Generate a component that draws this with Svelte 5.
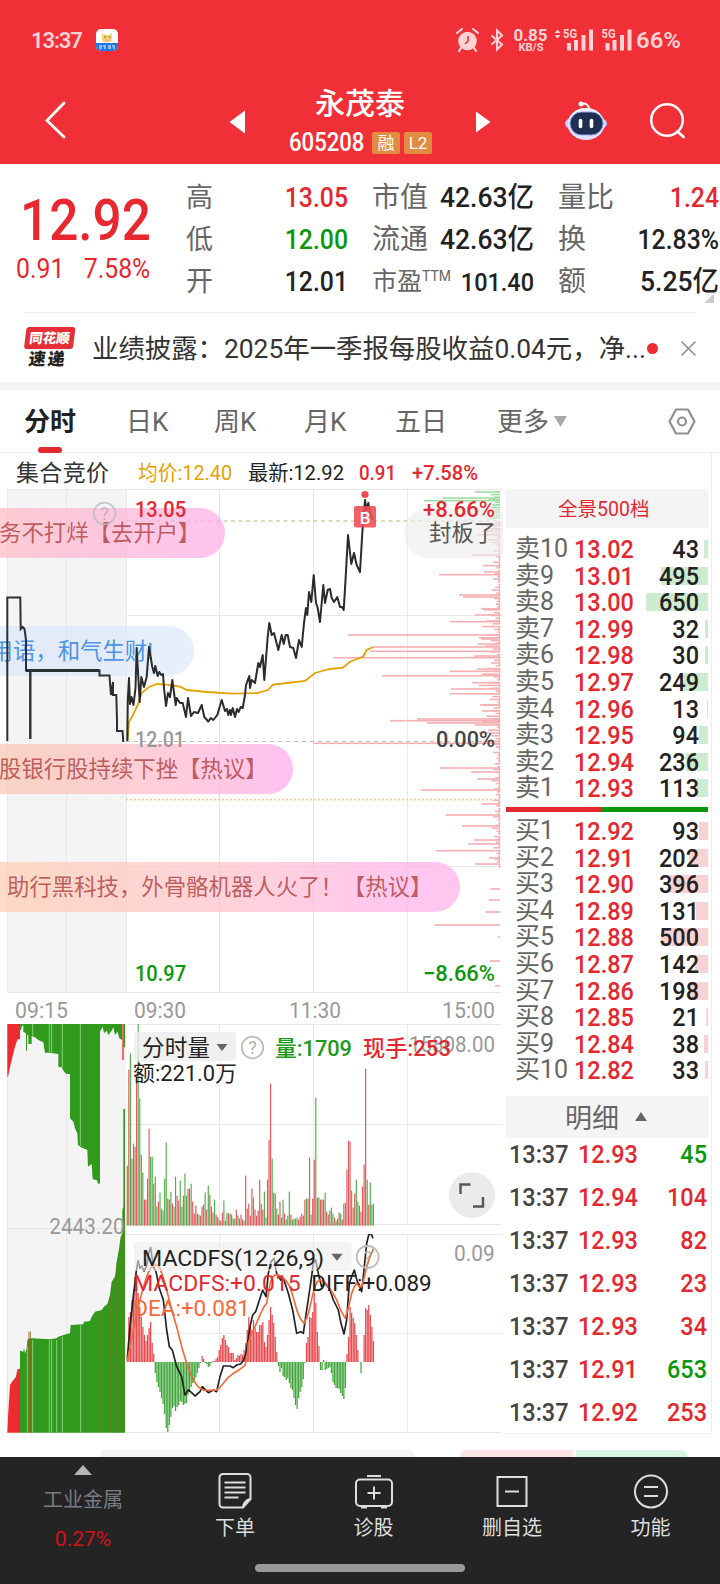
<script>
  const quotes = [
    ['高', '13.05', 'red', '市值', '42.63亿', 'unit', '量比', '1.24', 'red'],
    ['低', '12.00', 'green', '流通', '42.63亿', 'unit', '换', '12.83%', 'percent'],
    ['开', '12.01', '', '市盈', '101.40', 'small', '额', '5.25亿', 'unit']
  ];

  const asks = [
    ['卖10', '13.02', 43], ['卖9', '13.01', 495], ['卖8', '13.00', 650], ['卖7', '12.99', 32],
    ['卖6', '12.98', 30], ['卖5', '12.97', 249], ['卖4', '12.96', 13], ['卖3', '12.95', 94],
    ['卖2', '12.94', 236], ['卖1', '12.93', 113]
  ];
  const bids = [
    ['买1', '12.92', 93], ['买2', '12.91', 202], ['买3', '12.90', 396], ['买4', '12.89', 131],
    ['买5', '12.88', 500], ['买6', '12.87', 142], ['买7', '12.86', 198], ['买8', '12.85', 21],
    ['买9', '12.84', 38], ['买10', '12.82', 33]
  ];
  const trades = [
    ['12.93', 45, 'green'], ['12.94', 104, 'red'], ['12.93', 82, 'red'], ['12.93', 23, 'red'],
    ['12.93', 34, 'red'], ['12.91', 653, 'green'], ['12.92', 253, 'red']
  ];

  const auctionLine =
    '7.3,741 7.3,597.5 20.3,597.5 20.7,629 22.7,627 24.5,629 26,640 26,670.5 99.5,670.5 99.5,675.5 109.5,675.5 110,683 111,695 113,682 113,695 116.3,695 117,720 117,731 122.5,731 123.3,742';

  const priceLine =
    '127.3,741 127.8,700 129,678 130,704 131.5,697 133.5,705 135.5,688 136.7,648 138,672 139.7,702 141.3,677 144,687 146.7,677 149,647 152.3,667 154,673 155.3,666 157.7,676 159.3,672 161.3,675 163,674 164,688 166,706 168,693 170,697 172.3,680 175.7,705 176.7,698 180,703 182.7,703 186,717 188,698 191,716 194,712 198,713 201.7,705 204.3,717 208.3,721.5 210.7,718 213.3,720 217.3,715 221.7,700 225,711 227,709 228.3,715 230,710 231,715 232.7,708 235,717 237,709 238.7,712 240.7,707 242.7,708 245,695 246,685 249.3,676 250,688 251.7,680 255,683 258.3,663 260,667 262.7,655 264.3,680 267.7,637 269.3,623 271.7,635 274,633 278.3,650 281.7,635 283.7,644 285.7,635 287.7,635 290,647 293.3,648 296,658 299,640 301.7,647 304,623 306,608 307.3,615 309,592 311.3,602 313.7,575 316,603 317.7,608 320,622 323.3,585 325,603 327.7,590 330,589 331.7,598 334,602 337.3,597 340,607 342,607 343.7,610 345.7,577 348,535 351.3,564 354,553 356.7,565 360,572 362.3,533 365,500 366.5,510 368.3,503 370,513 372.7,520';

  const averageLine =
    '127.7,740 129,722 133,715 137.7,705 141.7,693 149,687 157,684 167,684.7 180,686.7 187,690 207,692 233,693.7 257,693 268,690 273,684.7 287,683 305,681 315,673 330,669 343,667.7 350,661.7 360,658 363,656.7 366.7,650 373,647';

  // [y, left edge] of the long bars in the price distribution
  const askProfile = [[492, 475], [498, 443], [500.7, 424], [505, 492], [511, 488], [517, 489]];
  const bidProfile = [
    [525, 481], [529, 486], [534.7, 477], [555, 472], [565.7, 483], [572, 484], [574.7, 439], [595, 459],
    [597, 463], [608.7, 481], [615, 475], [621.7, 450], [635, 348], [639, 481], [644, 478], [647, 373],
    [651.3, 370], [657.7, 333], [656, 474], [671.3, 450], [669, 477], [675.7, 382], [682.7, 472], [689, 451],
    [693.7, 450], [705, 480], [711, 482], [719, 417], [720.7, 390], [723, 427], [725, 475], [743.3, 313.5],
    [768, 440], [772, 471], [779, 477], [790, 421], [804, 482], [815, 446], [826, 462], [840, 474], [844, 468],
    [850.7, 436], [858, 489], [864, 475], [889, 490], [900, 489], [912, 485], [925, 434], [937, 498],
    [961, 490], [986, 495]
  ];
  const fine = [3, 9, 5, 12, 4, 2, 8, 14, 6, 3, 10, 5, 7, 2, 11, 4, 6];
  const profileTicks = Array.from({ length: 122 }, (_, i) => {
    const y = 523 + i * 2.8;
    const dense = (y > 605 && y < 745) || y < 540;
    return [y, 500 - (dense ? fine[i % 17] * 1.5 : fine[i % 17] * 0.6)];
  });
  const askTicks = Array.from({ length: 11 }, (_, i) => [492 + i * 2.6, 500 - 2 - fine[i] * 0.8]);

  // one entry per minute, falling minutes are negative
  const volumes = [
    60, 156, -172, -67, 82, 79, 149, -202, -127, 71, -53, 26, 26, -47, 97, -69, -69, 42, -49, -19, 24, -33, 17,
    -15, -47, -83, 27, 26, -34, 22, -19, -49, 30, 25, -45, -19, 30, -52, -30, 37, 37, -42, 24, 12, 20, 12, -11,
    10, 19, -21, -33, 16, -40, 31, 19, 13, -26, 11, 9, -6, 5, 13, -25, -5, -13, 12, -12, 11, -7, -7, 16, -10, 7,
    11, 6, -5, 50, 17, 22, 10, 37, -28, 16, 10, 15, 46, 22, 16, -34, -8, 46, 86, 142, -67, 33, -32, -17, 11, 24,
    -8, -26, 12, -6, -10, -34, 11, -6, -7, -7, -8, 6, 9, 12, 10, 26, -27, 27, 68, -11, 27, 66, -128, 28, -28, 26,
    26, 26, -33, 14, 11, -15, -18, -12, 8, -5, 7, 13, -12, 6, 22, -23, 56, 85, 84, -35, 18, 32, -46, -24, -20,
    14, 39, 61, 157, -46, 21, -43, -21, -22
  ];
  const macd = [
    5, 45, 50, 62, 72, 85, 88, 69, 55, 45, 35, 27, 21, 27, 34, 40, 19, 8, -11, -20, -25, -30, -36, -42, -52, -66,
    -70, -63, -55, -46, -44, -49, -45, -43, -39, -40, -43, -42, -41, -33, -30, -25, -21, -20, -15, -11, -6, -1,
    6, 3, -1, -2, -5, -4, -1, 1, 1, 3, 5, 12, 17, 24, 27, 22, 17, 15, 9, 9, 9, 2, 4, 7, 6, 8, 7, 12, 19, 32, 45,
    37, 32, 42, 34, 30, 30, 37, 37, 40, 20, 15, 27, 42, 55, 47, 39, 25, 10, -4, -10, -6, -14, -15, -18, -16, -21,
    -26, -28, -36, -43, -47, -36, -30, -25, -17, -1, 19, 25, 45, 44, 50, 69, 59, 30, 16, -8, -8, 2, -8, -7, -6,
    -5, -11, -20, -23, -26, -26, -27, -31, -34, -37, -26, 8, 25, 55, 49, 44, 39, 27, 12, 0, -11, 0, 27, 54, 52,
    57, 47, 35, 21
  ];
  const step = 1.558;

  const diff =
    '382,1045 390,950 400,860 408,790 414,752 420,775 425,768 432,783 440,768 446,730 452,712 460,770 468,785 478,835 490,870 500,960 508,1010 517,1020 530,1070 545,1100 555,1155 565,1140 575,1148 585,1158 600,1145 607,1130 625,1148 640,1140 650,1145 660,1100 670,1068 690,1068 700,1073 710,1065 722,1062 730,1052 738,1030 750,950 758,915 767,905 780,865 788,840 798,860 805,790 813,755 822,745 830,790 842,810 850,805 865,850 878,900 890,970 902,965 910,970 920,900 932,820 940,760 947,750 957,800 965,830 975,820 988,835 1000,870 1015,900 1023,940 1032,972 1040,930 1048,820 1055,800 1063,780 1072,815 1078,825 1085,845 1092,780 1100,700 1106,675 1114,672 1119,685';
  const dea =
    '382,1050 391,1010 400,960 410,910 420,870 430,832 440,800 451,775 462,765 472,766 480,775 490,805 500,840 515,900 530,950 545,1010 560,1060 575,1100 590,1125 600,1135 610,1140 630,1141 650,1140 660,1132 670,1120 685,1102 700,1090 718,1079 735,1066 742,1040 745,1000 755,972 765,950 780,915 792,890 800,880 806,845 812,815 818,801 825,795 835,795 845,800 858,812 870,830 882,870 892,905 902,928 912,940 922,920 930,890 938,855 945,830 952,815 960,810 972,815 985,830 998,848 1010,870 1024,905 1036,925 1046,890 1055,850 1063,830 1070,820 1078,830 1085,830 1092,805 1100,770 1110,740 1121,715';
</script>

{#snippet help(x, y)}
  <circle cx={x} cy={y} r="10.8" fill="none" stroke="#bdbdbd" stroke-width="1.8" />
  <text {x} y={y + 6.5} text-anchor="middle" font-size="18" fill="#b0b0b0">?</text>
{/snippet}

{#snippet level(row, side)}
  <div class="level">
    <span class="bar {side}" style="width: {Math.max(1, row[2] * 0.095)}px"></span>
    <span class="name">{row[0]}</span>
    <span class="price num">{row[1]}</span>
    <span class="amount num right">{row[2]}</span>
  </div>
{/snippet}

<div class="page">
  <header>
    <div class="status">
      <span class="clock">13:37</span>
      <svg class="app" viewBox="0 0 22 22" width="22" height="22">
        <rect width="22" height="22" rx="5" fill="#fff" />
        <path d="M0 14h22v3a5 5 0 0 1-5 5H5a5 5 0 0 1-5-5z" fill="#2278e0" />
        <path d="M6 4l3 2h4l3-2v8q-5 3-10 0z" fill="#f5d76e" />
        <circle cx="9" cy="8" r=".8" fill="#7a4a10" /><circle cx="13.500" cy="8" r=".8" fill="#7a4a10" />
        <path d="M9 10h5v3H9z" fill="#f6b9a0" />
        <path d="M3 17h3m1 0h3m2 0h3m1 0h3M3 19h3m2 0h2m2 0h3m2 0h2" stroke="#fff" stroke-width="1" />
      </svg>
      <svg class="signals" viewBox="452 26 236 30" width="236" height="30" fill="#ffd3d5">
        <circle cx="467.500" cy="41" r="9.300" />
        <path d="M457 33l5-4M478 33l-5-4M461 48l-2 3M474 48l2 3" stroke="#ffd3d5" stroke-width="2.200" stroke-linecap="round" />
        <path d="M468 36v5l-3 3" fill="none" stroke="#f02f36" stroke-width="1.600" />
        <path d="M491.500 35.500l10.500 9-5 5V30.500l5 5-10.500 9" fill="none" stroke="#ffd3d5" stroke-width="2.100" />
        <text x="513.500" y="41" font-size="17" font-weight="700" textLength="34" lengthAdjust="spacingAndGlyphs">0.85</text>
        <text x="518.500" y="50.500" font-size="10.500" font-weight="700" textLength="25" lengthAdjust="spacingAndGlyphs">KB/S</text>
        <path d="M554.500 33l3-3.500 3 3.500zM554.500 35l3 3.500 3-3.500z" />
        <text x="563" y="38" font-size="12" font-weight="700" textLength="14" lengthAdjust="spacingAndGlyphs">5G</text>
        <path d="M567 43h4v7.500h-4zM574 40h4v10.500h-4zM581.500 35h4v15.500h-4zM589 29.500h4v21h-4z" />
        <text x="601.500" y="38" font-size="12" font-weight="700" textLength="14" lengthAdjust="spacingAndGlyphs">5G</text>
        <path d="M605.500 43h4v7.500h-4zM612.500 40h4v10.500h-4zM620 35h4v15.500h-4zM627.500 29.500h4v21h-4z" />
        <text x="636" y="48" font-size="22" font-weight="600" textLength="45" lengthAdjust="spacingAndGlyphs">66%</text>
      </svg>
    </div>
    <div class="nav">
      <svg class="back" viewBox="0 0 24 40" width="24" height="40"><path d="M21 3L4 20.500 21 37" fill="none" stroke="#fff" stroke-width="2.800" stroke-linecap="round" /></svg>
      <svg class="prev" viewBox="0 0 16 24" width="16" height="24"><path d="M16 .5v23L.5 12z" fill="#fff" /></svg>
      <div class="title">
        <h1>永茂泰</h1>
        <div class="code"><span class="num">605208</span><i>融</i><i>L2</i></div>
      </div>
      <svg class="next" viewBox="0 0 15 22" width="15" height="22"><path d="M0 .5v21L14.500 11z" fill="#fff" /></svg>
      <svg class="robot" viewBox="0 0 44 40" width="44" height="40">
        <path d="M17 4q7-2 8 5" fill="none" stroke="#fff" stroke-width="2" /><circle cx="17" cy="4" r="2.500" fill="#fff" />
        <ellipse cx="22" cy="23.500" rx="21" ry="9" fill="#c9cdfb" />
        <ellipse cx="22" cy="24" rx="18.500" ry="16" fill="#e4e2ff" />
        <ellipse cx="22" cy="22" rx="17" ry="14" fill="#f6f5ff" />
        <rect x="6" y="12" width="33" height="23" rx="11.500" fill="#1f2f50" stroke="#8c9df5" />
        <path d="M16.500 20.500v6M27.500 20.500v6" stroke="#fff" stroke-width="3.600" stroke-linecap="round" />
      </svg>
      <svg class="search" viewBox="0 0 38 38" width="38" height="38"><circle cx="18" cy="18" r="15.800" fill="none" stroke="#fff" stroke-width="2.500" /><path d="M28.500 29.500l6 5.500" stroke="#fff" stroke-width="2.800" stroke-linecap="round" /></svg>
    </div>
  </header>

  <section class="quote">
    <div class="last">
      <div class="big num">12.92</div>
      <div class="change num"><span>0.91</span><span>7.58%</span></div>
    </div>
    <div class="fields">
      {#each quotes as q}
        <span class="label">{q[0]}</span><span class="value num right {q[2]}">{q[1]}</span>
        <span class="label second {q[5]}">{q[3]}{#if q[5] === 'small'}<sup>TTM</sup>{/if}</span><span class="value num right {q[5]}">{q[4]}</span>
        <span class="label third">{q[6]}</span><span class="value num right {q[8]}">{q[7]}</span>
      {/each}
    </div>
    <svg class="corner" viewBox="0 0 10 9" width="10" height="9"><path d="M10 0v9H0z" fill="#ccc" /></svg>
  </section>

  <section class="news">
    <div class="brand"><span class="tag"><b>同花顺</b></span><b class="sub">速递</b></div>
    <p>业绩披露：2025年一季报每股收益0.04元，净...</p>
    <span class="dot"></span>
    <svg viewBox="0 0 14 14" width="15" height="15"><path d="M.5 .5l13 13M13.500 .5L.5 13.500" stroke="#999" stroke-width="1.500" /></svg>
  </section>

  <nav class="tabs">
    <span class="active">分时</span><span>日K</span><span>周K</span><span>月K</span><span>五日</span><span>更多</span>
    <svg class="more" viewBox="0 0 13 11" width="13" height="11"><path d="M0 0h13L6.500 11z" fill="#aaa" /></svg>
    <svg class="gear" viewBox="0 0 28 27" width="28" height="27"><path d="M8 1.500h12l6.500 12-6.500 12H8l-6.500-12z" fill="none" stroke="#8f8f8f" stroke-width="2.200" stroke-linejoin="round" /><circle cx="14" cy="13.500" r="4" fill="none" stroke="#8f8f8f" stroke-width="2.200" /></svg>
  </nav>

  <main>
    <div class="charts">
      <svg viewBox="0 453 505 36" width="505" height="36" font-size="21">
        <text x="16" y="481" font-size="23" fill="#333" textLength="93">集合竞价</text>
        <text x="138" y="480" fill="#e5a300" textLength="94" lengthAdjust="spacingAndGlyphs">均价:12.40</text>
        <text x="248" y="480" fill="#222" textLength="96" lengthAdjust="spacingAndGlyphs">最新:12.92</text>
        <text x="359" y="480" font-weight="500" fill="#e3282f" textLength="37" lengthAdjust="spacingAndGlyphs">0.91</text>
        <text x="412" y="480" font-weight="500" fill="#e3282f" textLength="66" lengthAdjust="spacingAndGlyphs">+7.58%</text>
      </svg>

      <div class="price-chart">
        <svg viewBox="0 489 505 535" width="505" height="535" font-size="22">
          <rect x="7" y="489" width="119" height="503.500" fill="#f4f4f4" />
          <path d="M7.500 489V992.500M66.500 489V992.500M126.500 489V992.500M219.500 489V992.500M313.500 489V992.500M407.500 489V992.500M7 489.500H502M126 615.500H502M126 866.500H502M7 992.500H502" stroke="#e8e8e8" fill="none" />
          <path d="M126 521H500" stroke="#d3cdab" stroke-width="1.300" stroke-dasharray="4 3.500" />
          <path d="M126 741.500H500" stroke="#bbb" stroke-width="1.200" stroke-dasharray="4 4" />
          <path d="M126 799.700H500" stroke="#f3c9a0" stroke-width="1.800" stroke-dasharray="2 2" />
          {#each askTicks.concat(askProfile) as [y, x]}
            <rect {x} y={y - 0.8} width={500 - x} height="1.600" fill="#9fdca4" />
          {/each}
          {#each profileTicks.concat(bidProfile) as [y, x]}
            <rect {x} y={y - 0.8} width={500 - x} height="1.600" fill="#f6b0b4" />
          {/each}
          <path d="M499.500 521V868" stroke="#f6b0b4" stroke-width="1.500" stroke-dasharray="5 2" />
          <g fill="#999">
            <text x="15" y="1018" textLength="53" lengthAdjust="spacingAndGlyphs">09:15</text>
            <text x="134" y="1018" textLength="52" lengthAdjust="spacingAndGlyphs">09:30</text>
            <text x="289" y="1018" textLength="52" lengthAdjust="spacingAndGlyphs">11:30</text>
            <text x="442" y="1018" textLength="53" lengthAdjust="spacingAndGlyphs">15:00</text>
          </g>
        </svg>
        <div class="bullet b1">务不打烊【去开户】</div>
        <div class="bullet b2">用语，和气生财!</div>
        <div class="bullet b3">股银行股持续下挫【热议】</div>
        <div class="bullet b4">助行黑科技，外骨骼机器人火了！【热议】</div>
        <div class="bullet b5">封板了</div>
        <!-- price lines and scale labels stay readable above the comments -->
        <svg class="overlay" viewBox="0 489 505 535" width="505" height="535" font-size="22" font-weight="500">
          <polyline points={auctionLine} fill="none" stroke="#2b2f36" stroke-width="2" />
          <path d="M26 670.500H99.500" stroke="#2b2f36" stroke-width="2.800" />
          <path d="M30.300 670V739" stroke="#2b2f36" stroke-width="2.400" />
          <polyline points={averageLine} fill="none" stroke="#e5a300" stroke-width="1.800" />
          <polyline points={priceLine} fill="none" stroke="#2b2b2b" stroke-width="2" stroke-linejoin="round" />
          <circle cx="365" cy="494.500" r="3.600" fill="#ef4a4f" />
          <rect x="354" y="506" width="22" height="21.500" rx="2" fill="#ef4a50" fill-opacity=".88" />
          <text x="365" y="523.500" text-anchor="middle" font-size="17" fill="#fff">B</text>
          <g opacity=".8" font-weight="400">{@render help(104.500, 513.500)}</g>
          <text x="135" y="517" fill="#e3282f" textLength="51" lengthAdjust="spacingAndGlyphs">13.05</text>
          <text x="135" y="746.500" fill="#999" textLength="50" lengthAdjust="spacingAndGlyphs">12.01</text>
          <text x="135" y="981" fill="#0b970b" textLength="51" lengthAdjust="spacingAndGlyphs">10.97</text>
          <text x="423" y="517" fill="#e3282f" textLength="72" lengthAdjust="spacingAndGlyphs">+8.66%</text>
          <text x="436" y="746.500" fill="#444" textLength="59" lengthAdjust="spacingAndGlyphs">0.00%</text>
          <text x="423" y="981" fill="#0b970b" textLength="72" lengthAdjust="spacingAndGlyphs">−8.66%</text>
        </svg>
      </div>

      <div class="lower">
        <svg viewBox="21 42 357 1230" width="119" height="410">
          <rect x="21" y="42" width="357" height="1227" fill="#f4f4f4" />
          <path d="M200 42V1268M22 656H378M22 42V1268" stroke="#e4e4e4" stroke-width="3" />
          <path d="M22 42H60V88H52L50 95 45 110 40 130 35 150 30 172 24 200H22zM367 42h4v108h-4z" fill="#ee2c30" />
          <path d="M60 42V60H63L65 50 70 45V65L78 70V122H81V75H85V102H95V78L105 82 115 90 130 97 135 128H150L175 132V170L185 172 192 185 200 192H210V325L220 335 225 355 232 370 234 405 243 412 262 420 264 470 275 462 278 508 290 510 295 522 300 520V65L308 50 312 70 320 62 325 75 335 62 340 52 345 75 352 65 358 85 366 90V42zM371 42h4v70h-4z" fill="#2f9a1c" />
          <path d="M22 1268L24 1220 30 1125 40 1110 48 1100 52 1078 60 1076V1268z" fill="#ee2c30" />
          <path d="M60 1268V1022L70 1025 72 1015 75 1030 80 1015 82 990 88 985H95L150 988 170 985 175 980 200 972 210 970 212 945 250 943 252 935 270 933 275 920 285 905 305 900 312 890 322 882 330 855 335 815 345 800 350 755 358 710 362 680 367 670V600L370 590 370 297H375V1268z" fill="#2f9a1c" />
          <path d="M87 965V1268M91 965V1268M303 905V1268M330 860V1268M346 800V1268M351 760V1268M369 670V1268" stroke="#96651c" stroke-width="2.500" />
          <path d="M98 42V76M148 42V126M155 42V127M187 42V172M241 42V408M82 1010V1268M98 990V1268M148 990V1268M155 990V1268M170 990V1268M187 980V1268M242 945V1268" stroke="#c9efc0" stroke-width="1.800" />
          <text x="148" y="672" font-size="66" fill="#999" textLength="226" lengthAdjust="spacingAndGlyphs">2443.20</text>
        </svg>

        <div class="indicators">
          <svg viewBox="126 1024 379 210" width="379" height="210" font-size="22">
            <path d="M219.500 1024V1225M313.500 1024V1225M407.500 1024V1225M126 1024.500H502M126 1124.500H502M126 1224.500H502" stroke="#e8e8e8" />
            {#each volumes as v, i}
              <rect x={126.7 + i * step} y={1225.6 - Math.abs(v)} width="1.150" height={Math.abs(v)} fill={v < 0 ? '#4fae48' : '#e0565a'} />
            {/each}
            <rect x="134" y="1032" width="102" height="29" rx="3" fill="#ececec" fill-opacity=".8" />
            <text x="409" y="1052" fill="#999" textLength="86" lengthAdjust="spacingAndGlyphs">15808.00</text>
            <text x="142" y="1056" font-size="22.500" fill="#222" textLength="68">分时量</text>
            <path d="M216.500 1044h11l-5.500 7z" fill="#666" />
            {@render help(252.500, 1047.500)}
            <g font-weight="500">
              <text x="275" y="1056" fill="#1b9a1b" textLength="77" lengthAdjust="spacingAndGlyphs">量:1709</text>
              <text x="363" y="1056" fill="#e3282f" textLength="88" lengthAdjust="spacingAndGlyphs">现手:253</text>
            </g>
            <text x="133" y="1081" fill="#222" textLength="104" lengthAdjust="spacingAndGlyphs">额:221.0万</text>
            <circle cx="472" cy="1195" r="23" fill="#ebebeb" />
            <path d="M460.500 1194V1184.500H470.500M473 1206.500H483V1197" fill="none" stroke="#555" stroke-width="2.400" />
          </svg>

          <svg viewBox="378 672 1137 600" width="379" height="200" font-size="67">
            <path d="M658.500 672V1268M940.500 672V1268M1222.500 672V1268M378 673.500H1506M378 970H1506M378 1267.500H1506" stroke="#e8e8e8" stroke-width="3" />
            {#each macd as v, i}
              <rect x={380 + i * step * 3} y={v > 0 ? 1056 - v * 3 : 1056} width="3.700" height={Math.abs(v) * 3} fill={v < 0 ? '#3fa53a' : '#e8484d'} />
            {/each}
            <polyline points={diff} fill="none" stroke="#222" stroke-width="5" stroke-linejoin="round" />
            <polyline points={dea} fill="none" stroke="#f5683a" stroke-width="5" stroke-linejoin="round" />
            <rect x="402" y="696" width="653" height="87" rx="8" fill="#ececec" fill-opacity=".6" />
            <text x="426" y="769" fill="#222" textLength="546" lengthAdjust="spacingAndGlyphs">MACDFS(12,26,9)</text>
            <path d="M994 731h34l-17 21z" fill="#666" />
            <circle cx="1103" cy="741" r="33" fill="none" stroke="#bdbdbd" stroke-width="5.400" />
            <text x="1103" y="760" text-anchor="middle" font-size="52" fill="#b0b0b0">?</text>
            <text x="1362" y="753" fill="#999" textLength="122" lengthAdjust="spacingAndGlyphs">0.09</text>
            <text x="400" y="842" fill="#e3282f" textLength="502" lengthAdjust="spacingAndGlyphs">MACDFS:+0.015</text>
            <text x="934" y="842" fill="#222" textLength="361" lengthAdjust="spacingAndGlyphs">DIFF:+0.089</text>
            <text x="400" y="919" fill="#f5683a" textLength="350" lengthAdjust="spacingAndGlyphs">DEA:+0.081</text>
          </svg>
        </div>
      </div>
    </div>

    <aside>
      <div class="panorama">全景500档</div>
      <div class="book asks">
        {#each asks as row}{@render level(row, 'sell')}{/each}
      </div>
      <div class="ratio"><span></span></div>
      <div class="book">
        {#each bids as row}{@render level(row, 'buy')}{/each}
      </div>
      <div class="detail">明细 <svg viewBox="0 0 12 9" width="12" height="9"><path d="M6 0l6 9H0z" fill="#666" /></svg></div>
      <div class="trades">
        {#each trades as t}
          <div class="trade"><span class="num">13:37</span><span class="num red">{t[0]}</span><span class="num right {t[2]}">{t[1]}</span></div>
        {/each}
      </div>
    </aside>
  </main>

  <div class="peek"><span class="grey"></span><span class="up"></span><span class="down"></span></div>

  <footer>
    <div class="items">
      <div class="sector">
        <svg viewBox="0 0 18 10" width="18" height="10"><path d="M9 0l9 10H0z" fill="#b5b5b5" /></svg>
        <span>工业金属</span>
        <b>0.27%</b>
      </div>
      <div class="item">
        <svg viewBox="0 0 40 40" width="40" height="40"><path d="M8 3h24a3.500 3.500 0 0 1 3.500 3.500V28l-7.500 8.500H8A3.500 3.500 0 0 1 4.500 33V6.500A3.500 3.500 0 0 1 8 3zM35 28q-6 2-7 8M9.500 11.500h21M9.500 16.500h21M9.500 21.500h21M9.500 26.500h14" /></svg>
        <span>下单</span>
      </div>
      <div class="item">
        <svg viewBox="0 0 40 40" width="40" height="40"><rect x="2" y="8.500" width="36" height="26.500" rx="4" /><path d="M13 5h14M20 15.500v13M13.500 22h13M7 36.500h6M27 36.500h6" /></svg>
        <span>诊股</span>
      </div>
      <div class="item">
        <svg viewBox="0 0 40 40" width="40" height="40"><path d="M5.500 6h29v29h-29zM13 20.500h14" /></svg>
        <span>删自选</span>
      </div>
      <div class="item">
        <svg viewBox="0 0 40 40" width="40" height="40"><circle cx="20" cy="20.500" r="16" /><path d="M13 16h14M13 25h14" /></svg>
        <span>功能</span>
      </div>
    </div>
    <div class="home"></div>
  </footer>
</div>

<style>
  :global(body) {
    background: #fff;
  }

  .page {
    width: 720px;
    height: 1584px;
    overflow: hidden;
    display: flex;
    flex-direction: column;
    background: #fff;
    color: #222;
    font-family: Roboto, 'Noto Sans CJK SC', sans-serif;
  }

  .page > * {
    flex-shrink: 0;
  }

  svg {
    display: block;
    flex-shrink: 0;
  }

  /* condensed figures */
  .num {
    font-weight: 500;
    transform: scaleX(0.885);
    transform-origin: left;
  }

  .right {
    transform-origin: right;
    text-align: right;
  }

  .red {
    color: #e3282f;
  }

  .green {
    color: #0b970b;
  }

  header {
    height: 164px;
    background: #f02f36;
    color: #fff;
  }

  .status {
    height: 80px;
    padding: 0 32px 0 31px;
    display: flex;
    align-items: center;
    color: #ffd3d5;
  }

  .clock {
    width: 65px;
    font-size: 22px;
    font-weight: 600;
    letter-spacing: -0.05em;
  }

  .signals {
    margin-left: auto;
    margin-top: 2px;
  }

  .nav {
    height: 80px;
    padding: 0 33px 0 42px;
    display: flex;
    align-items: center;
  }

  .back {
    margin-left: 1px;
  }

  .prev {
    margin: 4px 0 0 162px;
  }

  .title {
    width: 160px;
    margin-left: 35px;
    text-align: center;
  }

  h1 {
    margin: 8px 0 0;
    font-size: 30px;
    line-height: 38px;
    font-weight: 500;
  }

  .code {
    display: flex;
    align-items: center;
    gap: 4px;
    margin-left: 9px;
    font-size: 25px;
    line-height: 40px;
  }

  .code .num {
    width: 79px;
    text-align: left;
  }

  .code i {
    width: 28px;
    height: 22px;
    font-size: 17px;
    line-height: 22px;
    font-style: normal;
    background: #e28c42;
    border-radius: 2px;
  }

  .next {
    margin: 4px 0 0 36px;
  }

  .robot {
    margin: 0 auto 0 73px;
  }

  .search {
    margin-top: 2px;
  }

  .quote {
    height: 148px;
    display: flex;
    position: relative;
  }

  .last {
    width: 186px;
    padding-left: 16px;
    box-sizing: border-box;
    color: #e8272e;
  }

  .big {
    margin: 19px 0 0 4px;
    font-size: 58px;
    line-height: 74px;
  }

  .change {
    width: 170px;
    display: flex;
    gap: 22px;
    font-size: 28px;
    line-height: 24px;
    font-weight: 400;
  }

  .fields {
    display: grid;
    grid-template-columns: 60px 102px 84px 102px 70px 115px;
    grid-template-rows: repeat(3, 42px);
    padding-top: 13px;
    line-height: 42px;
    font-size: 28px;
    white-space: nowrap;
  }

  .label {
    color: #666;
    font-size: 27px;
  }

  .second,
  .third {
    padding-left: 24px;
    font-size: 28px;
  }

  .label.small {
    font-size: 25px;
  }

  sup {
    font-size: 14px;
    line-height: 0;
    vertical-align: 9px;
  }

  .value.small {
    font-size: 26.500px;
  }

  .value.unit {
    transform: scaleX(0.945);
  }

  .corner {
    position: absolute;
    right: 6px;
    bottom: 9px;
  }

  .news {
    height: 70px;
    margin: 0 24px;
    border-top: 1px solid #eee;
    box-sizing: border-box;
    padding-top: 1px;
    display: flex;
    align-items: center;
  }

  .brand {
    width: 68px;
    display: flex;
    flex-direction: column;
    align-items: flex-start;
    transform: skewX(-7deg);
  }

  .tag {
    width: 49px;
    height: 22px;
    background: #e52f38;
    border-radius: 3px;
    color: #fff;
    font-size: 13.500px;
    line-height: 22px;
    text-align: center;
  }

  .tag b,
  .sub {
    font-weight: 900;
  }

  .sub {
    margin-left: 6px;
    font-size: 17px;
    line-height: 20px;
    letter-spacing: 2px;
  }

  .news p {
    width: 555px;
    margin: 1px 0 0;
    font-size: 26.400px;
    line-height: 40px;
    white-space: nowrap;
    color: #333;
  }

  .dot {
    width: 11px;
    height: 11px;
    margin: 0 23px 0 0;
    border-radius: 50%;
    background: #ee2b30;
  }

  .tabs {
    height: 71px;
    border-top: 8px solid #f4f4f4;
    border-bottom: 1px solid #eee;
    box-sizing: border-box;
    padding-left: 24px;
    display: grid;
    grid-template-columns: 102px 88px 90px 91px 102px 57px 114px 30px;
    align-items: center;
    font-size: 26px;
    color: #666;
  }

  .tabs span {
    line-height: 65px;
    height: 62px;
    position: relative;
  }

  .tabs .active {
    color: #222;
    font-weight: 700;
  }

  .active::after {
    content: '';
    position: absolute;
    left: 14px;
    bottom: -1px;
    width: 24px;
    height: 6px;
    border-radius: 3px;
    background: #e3282f;
  }

  main {
    display: flex;
    height: 981px;
  }

  .charts {
    width: 505px;
    flex-shrink: 0;
  }

  .price-chart {
    position: relative;
    width: 503px;
    overflow: hidden;
  }

  .overlay {
    position: absolute;
    left: 0;
    top: 0;
  }

  .bullet {
    position: absolute;
    left: 0;
    height: 50px;
    box-sizing: border-box;
    line-height: 50px;
    font-size: 22.400px;
    white-space: nowrap;
    border-radius: 0 25px 25px 0;
    color: rgba(178, 72, 72, 0.85);
    text-indent: -1px;
  }

  .b1 {
    top: 19px;
    width: 225px;
    background: linear-gradient(90deg, rgba(255, 190, 200, 0.75), rgba(255, 176, 232, 0.75));
  }

  .b2 {
    top: 137px;
    width: 194px;
    background: rgba(215, 228, 250, 0.6);
    color: #4b94e6;
    text-indent: -9.500px;
  }

  .b3 {
    top: 255px;
    width: 293px;
    background: linear-gradient(90deg, rgba(250, 200, 180, 0.75), rgba(255, 190, 205, 0.75) 55%, rgba(255, 172, 236, 0.75));
  }

  .b4 {
    top: 373px;
    width: 460px;
    background: linear-gradient(90deg, rgba(255, 208, 180, 0.75), rgba(255, 190, 205, 0.7) 55%, rgba(255, 180, 234, 0.75) 88%);
    text-indent: 7px;
  }

  .b5 {
    top: 19px;
    left: 404px;
    width: 110px;
    border-radius: 25px;
    background: rgba(236, 236, 236, 0.65);
    color: #555;
    text-indent: 25px;
  }

  .lower {
    display: flex;
    padding-left: 7px;
  }

  aside {
    width: 207px;
    border-right: 1px solid #eee;
    border-bottom: 1px solid #eee;
    padding: 36px 3px 0 1px;
    box-sizing: border-box;
  }

  .panorama {
    height: 39px;
    background: #f4f4f4;
    color: #e3282f;
    font-size: 19.500px;
    line-height: 41px;
    padding-left: 52px;
  }

  .book {
    padding-top: 6px;
  }

  .asks {
    padding-top: 8px;
  }

  .level {
    height: 26.600px;
    line-height: 26.600px;
    display: grid;
    grid-template-columns: 59px 60px 1fr;
    padding: 0 9px 0 9px;
    position: relative;
    white-space: nowrap;
  }

  .name {
    font-size: 25px;
    color: #666;
  }

  .price,
  .amount {
    font-size: 26.500px;
    position: relative;
  }

  .price {
    color: #e3282f;
  }

  .amount {
    color: #222;
  }

  .bar {
    position: absolute;
    right: 0;
    top: 4px;
    height: 18px;
  }

  .sell {
    background: #cdebcf;
  }

  .buy {
    background: #fbd2d4;
  }

  .ratio {
    height: 5px;
    margin-top: 5px;
    background: #0b970b;
  }

  .ratio span {
    display: block;
    width: 95px;
    height: 5px;
    background: #e3282f;
  }

  .detail {
    height: 42px;
    margin-top: 12px;
    background: #f4f4f4;
    display: flex;
    align-items: center;
    gap: 16px;
    padding-left: 59px;
    font-size: 27px;
    color: #666;
  }

  .trades {
    margin-top: -6px;
  }

  .trade {
    height: 43px;
    line-height: 43px;
    display: grid;
    grid-template-columns: 69px 66px 1fr;
    padding: 0 1px 0 3px;
    font-size: 26.500px;
    color: #444;
  }

  .peek {
    height: 23px;
    padding-left: 101px;
    display: flex;
    align-items: flex-end;
    box-sizing: border-box;
  }

  .peek span {
    height: 7px;
  }

  .peek .grey {
    width: 314px;
    background: #f3f3f3;
    border-radius: 0 14px 0 0;
  }

  .peek .up {
    width: 113px;
    margin-left: 45px;
    background: #fde4e5;
    border-radius: 14px 0 0;
  }

  .peek .down {
    width: 112px;
    margin-left: 3px;
    background: #d8f5e3;
    border-radius: 0 14px 0 0;
  }

  footer {
    height: 127px;
    background: #242424;
    color: #ddd;
  }

  .items {
    height: 107px;
    display: grid;
    grid-template-columns: 166px 138px 139px 138px 139px;
    font-size: 20px;
  }

  .sector,
  .item {
    display: flex;
    flex-direction: column;
    align-items: center;
  }

  .sector {
    padding-top: 8px;
    color: #797c84;
  }

  .sector span {
    margin-top: 11px;
    line-height: 28px;
  }

  .sector b {
    margin-top: 11px;
    font-size: 21px;
    line-height: 28px;
    font-weight: 400;
    color: #d5121c;
  }

  .item {
    padding-top: 14px;
  }

  .item svg {
    fill: none;
    stroke: #ddd;
    stroke-width: 2;
  }

  .item span {
    margin-top: 3px;
    line-height: 28px;
  }

  .home {
    width: 210px;
    height: 8px;
    margin: 0 auto;
    border-radius: 4px;
    background: #999;
  }
</style>
